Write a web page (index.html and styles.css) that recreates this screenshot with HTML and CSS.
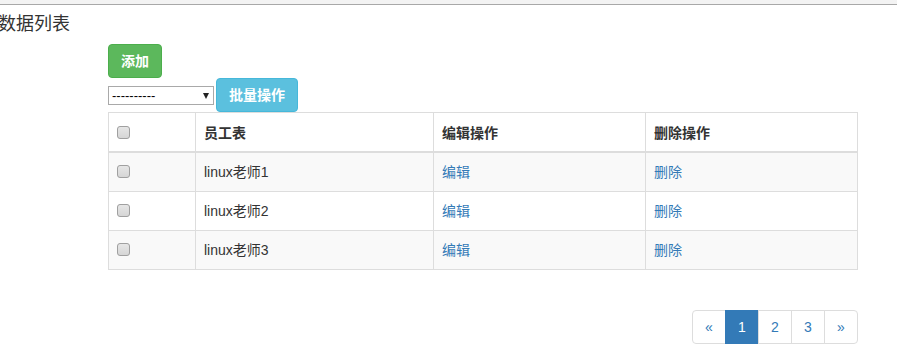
FILE: index.html
```html
<!DOCTYPE html>
<html lang="zh-CN">
<head>
  <meta charset="UTF-8">
  <title>数据列表</title>
  <link rel="stylesheet" href="styles.css">
</head>
<body>
  <div class="topbar"></div>
  <h3 class="title">数据列表</h3>

  <div class="content">
    <button class="btn btn-add">添加</button>
    <div class="actions">
      <div class="select-wrap">
        <select class="action-select">
          <option>----------</option>
        </select>
      </div>
      <button class="btn btn-batch">批量操作</button>
    </div>

    <table class="list">
      <thead>
        <tr>
          <th class="col-check"><input type="checkbox"></th>
          <th class="col-name">员工表</th>
          <th class="col-edit">编辑操作</th>
          <th>删除操作</th>
        </tr>
      </thead>
      <tbody>
        <tr>
          <td><input type="checkbox"></td>
          <td>linux老师1</td>
          <td><a href="#">编辑</a></td>
          <td><a href="#">删除</a></td>
        </tr>
        <tr>
          <td><input type="checkbox"></td>
          <td>linux老师2</td>
          <td><a href="#">编辑</a></td>
          <td><a href="#">删除</a></td>
        </tr>
        <tr>
          <td><input type="checkbox"></td>
          <td>linux老师3</td>
          <td><a href="#">编辑</a></td>
          <td><a href="#">删除</a></td>
        </tr>
      </tbody>
    </table>

    <ul class="pager">
      <li><a href="#">&laquo;</a></li>
      <li class="active"><a href="#">1</a></li>
      <li><a href="#">2</a></li>
      <li><a href="#">3</a></li>
      <li><a href="#">&raquo;</a></li>
    </ul>
  </div>
</body>
</html>
```

FILE: styles.css
```css
body {
  margin: 0;
  font-family: "Liberation Sans", "Noto Sans CJK SC", sans-serif;
  font-size: 14px;
  color: #333;
  background: #fff;
}

.topbar {
  height: 4px;
  background: #f3f3f3;
  border-bottom: 1px solid #a8a8a8;
}

.title {
  margin: 8px 0 0 -2px;
  font-size: 18px;
  line-height: 22px;
  font-weight: normal;
  color: #333;
}

.content {
  width: 750px;
  margin: 9px 0 0 108px;
  display: flex;
  flex-direction: column;
  align-items: flex-start;
}

.btn {
  border: 1px solid transparent;
  border-radius: 4px;
  color: #fff;
  font-family: inherit;
  font-size: 14px;
  font-weight: bold;
  line-height: 20px;
  padding: 6px 12px;
  cursor: pointer;
}

.btn-add {
  background: #5cb85c;
  border-color: #4cae4c;
  height: 34px;
}

.actions {
  display: flex;
  align-items: center;
  gap: 2px;
}

.select-wrap {
  position: relative;
  margin-top: 1px;
}

.select-wrap::after {
  content: "";
  position: absolute;
  right: 5px;
  top: 7px;
  border-left: 3.5px solid transparent;
  border-right: 3.5px solid transparent;
  border-top: 6px solid #222;
  pointer-events: none;
}

.action-select {
  display: block;
  width: 106px;
  height: 19px;
  appearance: none;
  -webkit-appearance: none;
  font-family: "Liberation Sans", sans-serif;
  font-size: 13px;
  color: #000;
  border: 1px solid #a9a9a9;
  background: #fff;
  padding: 0 0 0 3px;
  border-radius: 0;
}

.btn-batch {
  background: #5bc0de;
  border-color: #46b8da;
  height: 34px;
}

.list {
  width: 750px;
  border-collapse: collapse;
  border: 1px solid #ddd;
}

.list th,
.list td {
  border: 1px solid #ddd;
  padding: 8px;
  line-height: 20px;
  text-align: left;
}

.list th {
  padding: 10px 8px 8px;
  border-bottom: 2px solid #ddd;
}

.list .col-check {
  width: 70px;
}

.list .col-name {
  width: 221px;
}

.list .col-edit {
  width: 195px;
}

.list tbody tr:nth-child(odd) {
  background: #f9f9f9;
}

.list td {
  height: 22px;
}

.list input[type="checkbox"] {
  appearance: none;
  -webkit-appearance: none;
  width: 13px;
  height: 13px;
  margin: 0;
  vertical-align: -1px;
  border: 1px solid #a0a0a0;
  border-radius: 3px;
  background: linear-gradient(#e6e6e6, #d6d6d6);
}

.list a {
  color: #337ab7;
  text-decoration: none;
}

.pager {
  list-style: none;
  display: flex;
  margin: 40px 0 0 auto;
  padding: 0;
}

.pager li a {
  display: block;
  width: 34px;
  height: 34px;
  box-sizing: border-box;
  line-height: 20px;
  padding: 6px 0;
  text-align: center;
  color: #337ab7;
  text-decoration: none;
  border: 1px solid #ddd;
  margin-left: -1px;
  background: #fff;
}

.pager li:first-child a {
  margin-left: 0;
  border-radius: 4px 0 0 4px;
}

.pager li:last-child a {
  border-radius: 0 4px 4px 0;
}

.pager li.active a {
  background: #337ab7;
  border-color: #337ab7;
  color: #fff;
}
```
